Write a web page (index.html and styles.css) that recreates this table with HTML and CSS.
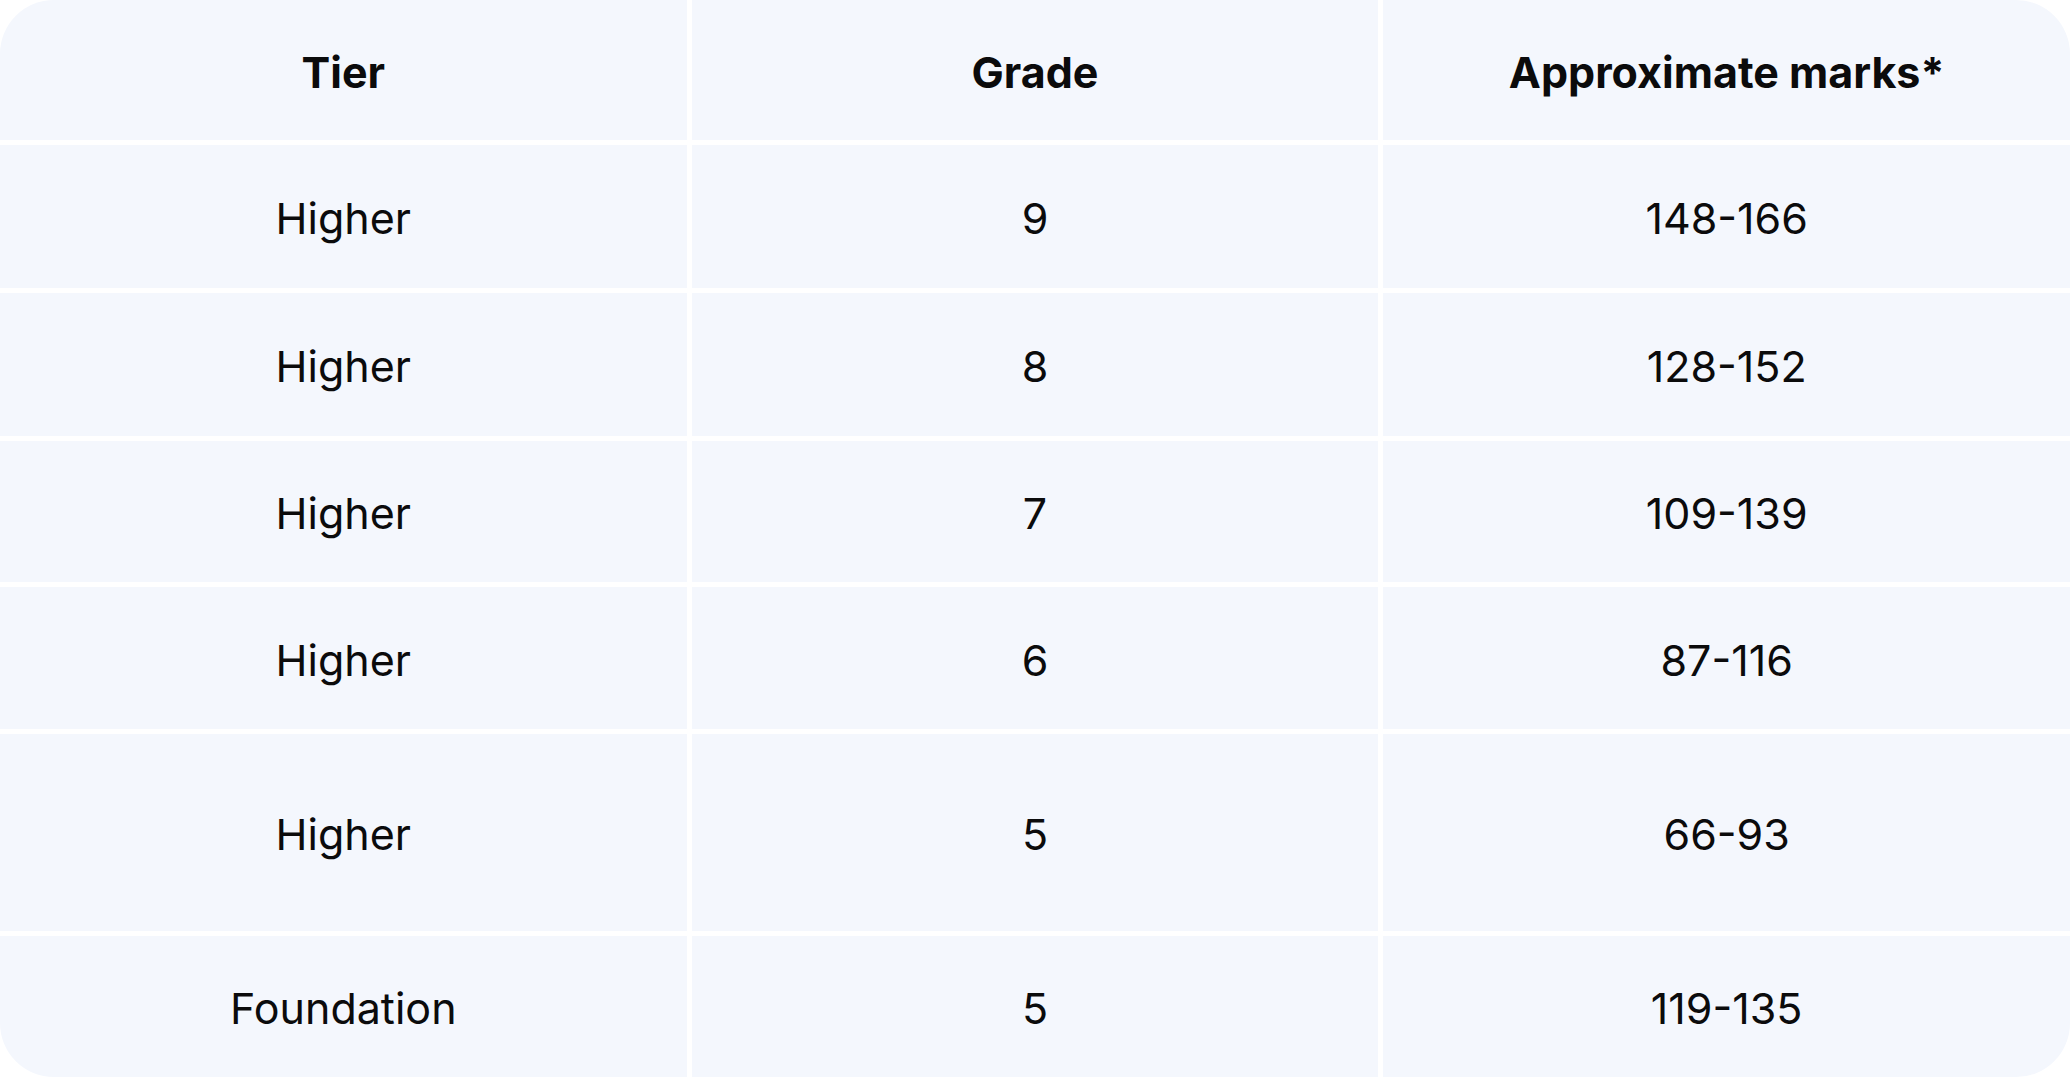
FILE: index.html
```html
<!DOCTYPE html>
<html lang="en">
<head>
<meta charset="utf-8">
<title>Grade boundaries</title>
<link rel="stylesheet" href="styles.css">
</head>
<body>
<div class="table">
  <div class="cell head">Tier</div>
  <div class="cell head">Grade</div>
  <div class="cell head">Approximate marks*</div>

  <div class="cell">Higher</div>
  <div class="cell">9</div>
  <div class="cell">148-166</div>

  <div class="cell">Higher</div>
  <div class="cell">8</div>
  <div class="cell">128-152</div>

  <div class="cell">Higher</div>
  <div class="cell">7</div>
  <div class="cell">109-139</div>

  <div class="cell">Higher</div>
  <div class="cell">6</div>
  <div class="cell">87-116</div>

  <div class="cell">Higher</div>
  <div class="cell">5</div>
  <div class="cell">66-93</div>

  <div class="cell">Foundation</div>
  <div class="cell">5</div>
  <div class="cell">119-135</div>
</div>
</body>
</html>
```

FILE: styles.css
```css
html, body {
  margin: 0;
  padding: 0;
  background: #ffffff;
}

body {
  width: 2070px;
  height: 1077px;
  overflow: hidden;
  font-family: Inter, "Noto Sans", "Liberation Sans", sans-serif;
  color: #0b0b0c;
}

.table {
  display: grid;
  grid-template-columns: repeat(3, 1fr);
  grid-template-rows: 140px 143px 143px 141px 142px 197px 141px;
  gap: 5px;
  background: #ffffff;
  border-radius: 54px;
  overflow: hidden;
  width: 2070px;
  height: 1077px;
}

.cell {
  background: #f4f7fd;
  display: flex;
  align-items: center;
  justify-content: center;
  padding-top: 3px;
  font-size: 43px;
  font-weight: 400;
  letter-spacing: 0;
}

.head {
  font-weight: 700;
}
```
